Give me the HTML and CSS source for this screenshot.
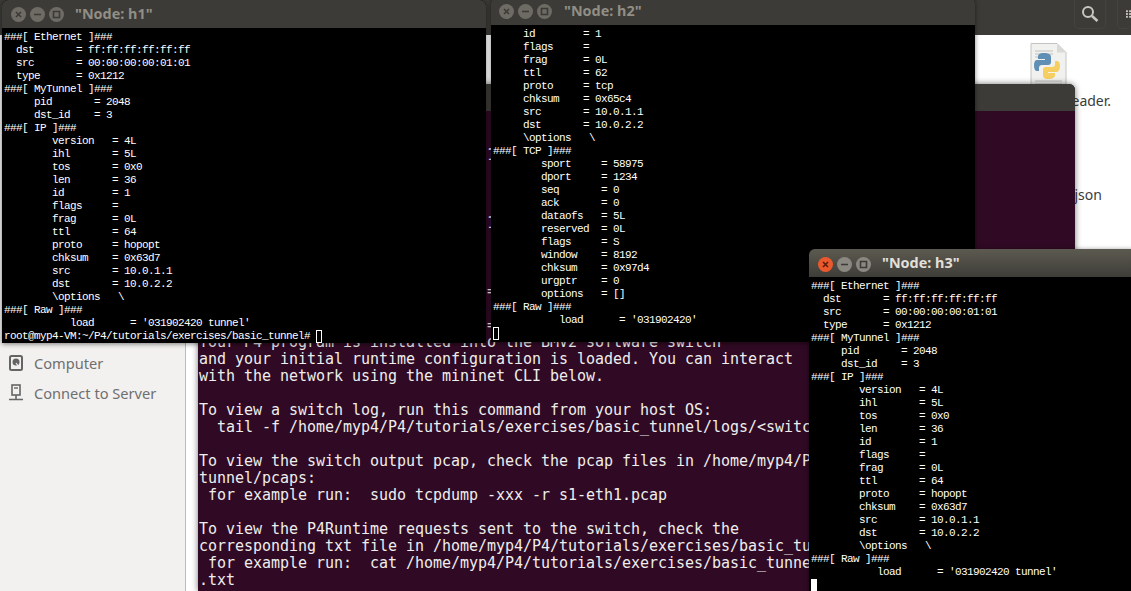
FILE: index.html
```html
<!DOCTYPE html>
<html lang="en">
<head>
<meta charset="utf-8">
<title>Desktop</title>
<link rel="stylesheet" href="styles.css">
</head>
<body>
<div class="desktop">
  <header class="topbar">
    <div class="tool tool-search">
      <svg width="18" height="18" viewBox="0 0 18 18" fill="none" stroke="#c9c6bf" stroke-width="2"><circle cx="7" cy="7" r="5"/><path d="M11 11l5.500 5" stroke-width="2.600"/></svg>
    </div>
    <div class="tool tool-grid">
      <svg width="8" height="12" viewBox="0 0 8 12" fill="#c9c6bf"><rect x="0" y="0" width="3" height="3"/><rect x="5" y="0" width="3" height="3"/><rect x="0" y="4.500" width="3" height="3"/><rect x="5" y="4.500" width="3" height="3"/><rect x="0" y="9" width="3" height="3"/><rect x="5" y="9" width="3" height="3"/></svg>
    </div>
  </header>
  <div class="files">
    <aside class="sidebar">
      <div class="place">
        <svg class="place-icon" width="14" height="16" viewBox="0 0 14 16" fill="none"><rect x="1" y="1" width="12" height="14" rx="1.500" stroke="#656565" stroke-width="2"/><circle cx="7" cy="7" r="3.500" fill="#656565"/><path d="M7 8l3 4" stroke="#f2f1f0" stroke-width="1.200"/></svg>
        <span>Computer</span>
      </div>
      <div class="place">
        <svg class="place-icon" width="14" height="18" viewBox="0 0 14 18" fill="none"><rect x="3" y="1" width="8" height="10" stroke="#656565" stroke-width="1.600"/><path d="M5 4h4" stroke="#656565" stroke-width="1.400"/><path d="M7 11v4M0 15.500h14" stroke="#656565" stroke-width="1.600"/></svg>
        <span>Connect to Server</span>
      </div>
    </aside>
    <main class="grid">
      <svg class="py-file" width="37" height="44" viewBox="0 0 37 44">
        <path d="M1 .5h26l9 9v34H1z" fill="#f1f1ef" stroke="#c4c4c2"/>
        <path d="M27 .5v9h9z" fill="#d9d9d6"/>
        <path d="M5 8h18M5 11h18M5 14h3M5 38h27M5 41h27" stroke="#c0c0bd"/>
        <path d="M14 10c-5 0-6 2-6 3.500V16h7v1H7c-2 0-3 2-3 5.500S5 28 7 28h2v-3c0-2 1-3 3-3h6c2 0 3-1 3-3v-5c0-3-3-4-7-4z" fill="#5f8fb4"/>
        <path d="M18 36c5 0 7-2 7-3.500V30h-7v-1h8c2 0 4-2 4-5.500S29 18 27 18h-2v3c0 2-1 3-3 3h-6c-2 0-3 1-3 3v5c0 3 2 4 5 4z" fill="#f5cf62"/>
      </svg>
      <span class="file-label label-reader">reader.</span>
      <span class="file-label label-json">s1.json</span>
    </main>
  </div>

  <section class="terminal">
    <div class="term-bar"></div>
<pre class="term-text">


                                1



                                1



                                =

                                =
Your P4 program is installed into the BMV2 software switch
and your initial runtime configuration is loaded. You can interact
with the network using the mininet CLI below.

To view a switch log, run this command from your host OS:
  tail -f /home/myp4/P4/tutorials/exercises/basic_tunnel/logs/&lt;switchname&gt;.log

To view the switch output pcap, check the pcap files in /home/myp4/P4/tutorials/exercises/basic_
tunnel/pcaps:
 for example run:  sudo tcpdump -xxx -r s1-eth1.pcap

To view the P4Runtime requests sent to the switch, check the
corresponding txt file in /home/myp4/P4/tutorials/exercises/basic_tunnel/logs:
 for example run:  cat /home/myp4/P4/tutorials/exercises/basic_tunnel/logs/s1-p4runtime-requests
.txt</pre>
  </section>

  <section class="xterm xterm-h1">
    <div class="xbar">
      <div class="btns">
        <svg class="btn" viewBox="0 0 15 15"><circle cx="7.500" cy="7.500" r="7.500"/><path d="M5 5l5 5M10 5l-5 5"/></svg>
        <svg class="btn" viewBox="0 0 15 15"><circle cx="7.500" cy="7.500" r="7.500"/><path d="M4 7.500h7"/></svg>
        <svg class="btn" viewBox="0 0 15 15"><circle cx="7.500" cy="7.500" r="7.500"/><path d="M4.500 4.500h6v6h-6z"/></svg>
      </div>
      <span class="xtitle">"Node: h1"</span>
    </div>
<pre class="xtext">###[ Ethernet ]###
  dst       = ff:ff:ff:ff:ff:ff
  src       = 00:00:00:00:01:01
  type      = 0x1212
###[ MyTunnel ]###
     pid       = 2048
     dst_id    = 3
###[ IP ]###
        version   = 4L
        ihl       = 5L
        tos       = 0x0
        len       = 36
        id        = 1
        flags     = 
        frag      = 0L
        ttl       = 64
        proto     = hopopt
        chksum    = 0x63d7
        src       = 10.0.1.1
        dst       = 10.0.2.2
        \options   \
###[ Raw ]###
           load      = '031902420 tunnel'
root@myp4-VM:~/P4/tutorials/exercises/basic_tunnel# <span class="cursor-hollow"></span></pre>
  </section>

  <section class="xterm xterm-h2">
    <div class="xbar xbar-h2">
      <div class="btns">
        <svg class="btn" viewBox="0 0 15 15"><circle cx="7.500" cy="7.500" r="7.500"/><path d="M5 5l5 5M10 5l-5 5"/></svg>
        <svg class="btn" viewBox="0 0 15 15"><circle cx="7.500" cy="7.500" r="7.500"/><path d="M4 7.500h7"/></svg>
        <svg class="btn" viewBox="0 0 15 15"><circle cx="7.500" cy="7.500" r="7.500"/><path d="M4.500 4.500h6v6h-6z"/></svg>
      </div>
      <span class="xtitle">"Node: h2"</span>
    </div>
<pre class="xtext">     id        = 1
     flags     = 
     frag      = 0L
     ttl       = 62
     proto     = tcp
     chksum    = 0x65c4
     src       = 10.0.1.1
     dst       = 10.0.2.2
     \options   \
###[ TCP ]###
        sport     = 58975
        dport     = 1234
        seq       = 0
        ack       = 0
        dataofs   = 5L
        reserved  = 0L
        flags     = S
        window    = 8192
        chksum    = 0x97d4
        urgptr    = 0
        options   = []
###[ Raw ]###
           load      = '031902420'
<span class="cursor-hollow"></span></pre>
  </section>

  <section class="xterm xterm-h3">
    <div class="xbar xbar-active">
      <div class="btns">
        <svg class="btn btn-close" viewBox="0 0 15 15"><circle cx="7.500" cy="7.500" r="7.500"/><path d="M5 5l5 5M10 5l-5 5"/></svg>
        <svg class="btn" viewBox="0 0 15 15"><circle cx="7.500" cy="7.500" r="7.500"/><path d="M4 7.500h7"/></svg>
        <svg class="btn" viewBox="0 0 15 15"><circle cx="7.500" cy="7.500" r="7.500"/><path d="M4.500 4.500h6v6h-6z"/></svg>
      </div>
      <span class="xtitle">"Node: h3"</span>
    </div>
<pre class="xtext">###[ Ethernet ]###
  dst       = ff:ff:ff:ff:ff:ff
  src       = 00:00:00:00:01:01
  type      = 0x1212
###[ MyTunnel ]###
     pid       = 2048
     dst_id    = 3
###[ IP ]###
        version   = 4L
        ihl       = 5L
        tos       = 0x0
        len       = 36
        id        = 1
        flags     = 
        frag      = 0L
        ttl       = 64
        proto     = hopopt
        chksum    = 0x63d7
        src       = 10.0.1.1
        dst       = 10.0.2.2
        \options   \
###[ Raw ]###
           load      = '031902420 tunnel'
<span class="cursor-solid"></span></pre>
  </section>
</div>
</body>
</html>
```

FILE: styles.css
```css
* { box-sizing: border-box; }
html, body { margin: 0; height: 100%; overflow: hidden; background: #fff; }

.desktop {
  position: relative;
  width: 1131px;
  height: 591px;
  overflow: hidden;
  display: flex;
  flex-direction: column;
}

.topbar {
  height: 35px;
  flex: none;
  background: #3c3b37;
  display: flex;
  justify-content: flex-end;
  gap: 11px;
}
.tool {
  height: 29px;
  border: 1px solid #44433f;
  border-top: 0;
  border-radius: 0 0 5px 5px;
  display: flex;
  align-items: center;
  justify-content: center;
}
.tool-search { width: 32px; margin-right: 0; }
.tool-grid { width: 14px; justify-content: flex-start; padding-left: 8px; border-right: 0; overflow: hidden; }

.files { flex: 1; display: flex; min-height: 0; }
.sidebar {
  width: 186px;
  flex: none;
  background: #f2f1f0;
  border-right: 1px solid #bdbbb7;
  padding-top: 313px;
  display: flex;
  flex-direction: column;
  font: 14.6px/30px "Noto Sans", sans-serif;
  color: #6f6f6f;
}
.place { display: flex; align-items: center; height: 30px; padding-left: 9px; gap: 11px; }
.place-icon { flex: none; }

.grid { flex: 1; position: relative; }
.py-file { position: absolute; left: 844px; top: 8px; }
.file-label { position: absolute; font: 14px/18px "Noto Sans", sans-serif; color: #3c3c3c; }
.label-reader { left: 880px; top: 57px; }
.label-json { left: 870px; top: 151px; }

.terminal {
  position: absolute;
  left: 198px;
  top: 84px;
  width: 877px;
  height: 507px;
  background: #300a24;
  border-radius: 6px 6px 0 0;
  box-shadow: 0 0 6px rgba(0,0,0,.55);
  overflow: hidden;
}
.term-bar { height: 27px; background: #3c3b37; }
.term-text {
  margin: 0;
  padding: 2px 0 0 1px;
  font: 15px/17px "DejaVu Sans Mono", monospace;
  letter-spacing: -0.03px;
  color: #eeeeec;
  white-space: pre;
}

.xterm {
  position: absolute;
  background: #000;
  display: flex;
  flex-direction: column;
  border-radius: 6px 6px 0 0;
  box-shadow: 0 1px 5px rgba(0,0,0,.5);
  overflow: hidden;
}
.xterm-h1 { left: 2px; top: 0; width: 484px; height: 343px; }
.xterm-h2 { left: 491px; top: -3px; width: 484px; height: 345px; }
.xterm-h3 { left: 809px; top: 249px; width: 330px; height: 342px; }

.xbar {
  height: 28px;
  flex: none;
  display: flex;
  align-items: center;
  background: #3c3b37;
  padding: 1px 0 0 9px;
}
.xbar-h2 { padding-left: 8px; }
.xbar-h2 .xtitle { margin-left: 1px; }
.xbar-active { background: linear-gradient(#5c5a50, #3e3d38); padding-top: 2px; }
.btns { display: flex; gap: 4px; width: 64px; flex: none; }
.btn { width: 15px; height: 15px; flex: none; }
.btn circle { fill: #6d6b64; }
.btn path { fill: none; stroke: #3b3a36; stroke-width: 1.6; }
.xbar-active .btn circle { fill: #8a8880; }
.xbar-active .btn-close circle { fill: #e9592d; }
.xbar-active .btn-close path { stroke: #5a1d08; }
.xtitle { font: 700 14.4px/20px "Noto Sans", sans-serif; color: #918e85; margin-top: -2px; }
.xbar-active .xtitle { color: #e2dfd8; }

.xtext {
  margin: 0;
  padding: 3px 0 0 2px;
  font: 11px/13px "Liberation Mono", monospace;
  letter-spacing: -0.6px;
  color: #fff;
  white-space: pre;
}
.cursor-hollow {
  display: inline-block;
  width: 6px;
  height: 13px;
  border: 1px solid #fff;
  vertical-align: top;
}
.cursor-solid {
  display: inline-block;
  width: 6px;
  height: 13px;
  background: #fff;
  vertical-align: top;
}
```
